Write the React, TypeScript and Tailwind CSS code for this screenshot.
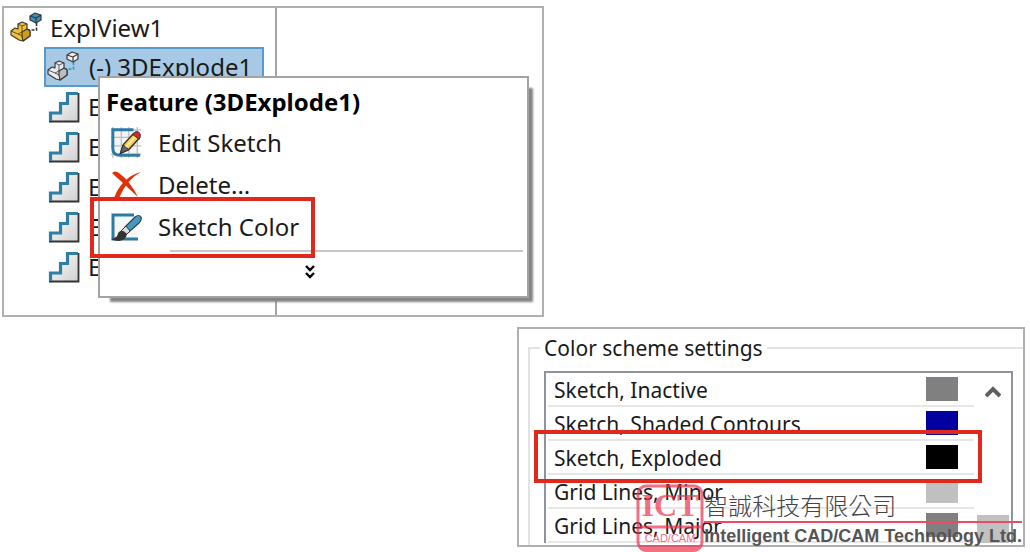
import type { ReactNode } from 'react'

const steps = [1, 2, 3, 4, 5]

const swatches = [
  { label: 'Sketch, Inactive', color: 'bg-[#808080]' },
  { label: 'Sketch, Shaded Contours', color: 'bg-[#00009f]' },
  { label: 'Sketch, Exploded', color: 'bg-black', marked: true },
  { label: 'Grid Lines, Minor', color: 'bg-[#c0c0c0]' },
  { label: 'Grid Lines, Major', color: 'bg-[#808080]' },
]

function ExplodeIcon({ part, side, cube, line }: { part: string; side: string; cube: string; line: string }) {
  return (
    <svg viewBox="0 0 32 32" className="size-8 shrink-0" aria-hidden="true">
      <path d="M26.500 11 V18 H17" fill="none" stroke={line} strokeWidth="1.6" strokeDasharray="3 1.5" />
      <g stroke="#3a3a3a" strokeWidth="1.2" strokeLinejoin="round">
        <path d="M1 19 L5 16 L8 17 L8 12 L12 10 L17 12 L17 17 L20 19 L20 24 L13 29 L9 28 L1 23 Z" fill={part} />
        <path d="M12 20 L17 17 L20 19 L20 24 L13 29 L12 24 Z" fill={side} />
        <path d="M1 19 L8 22 L12 20 L12 14 L8 12 M12 14 L17 12 M8 22 L12 24" fill="none" strokeWidth="0.8" />
        <path d="M20 4 L25 1 L31 3 L31 8 L26 11 L20 8 Z" fill={cube} />
        <path d="M20 4 L26 6 L31 3 M26 6 V11" fill="none" />
      </g>
    </svg>
  )
}

function StepIcon() {
  return (
    <svg viewBox="0 0 32 32" className="size-8 shrink-0" aria-hidden="true">
      <defs>
        <linearGradient id="step" x1="0" y1="0" x2="1" y2="1">
          <stop offset="0" stopColor="#fff" />
          <stop offset="1" stopColor="#cfcfcf" />
        </linearGradient>
      </defs>
      <path d="M2 30 V21 H12 V12 H19 V2 H31 V30 Z" fill="url(#step)" />
      <path d="M30.500 2 V30.500 H1" fill="none" stroke="#333" strokeWidth="1.8" />
      <path d="M2.500 30 V22 H12.500 V12.500 H19.500 V2.500 H30" fill="none" stroke="#2f7ea6" strokeWidth="3.2" />
    </svg>
  )
}

function EditSketchIcon() {
  return (
    <svg viewBox="0 0 34 34" className="size-8 shrink-0" aria-hidden="true">
      <rect x="3" y="3" width="27" height="26" fill="#f4f4f4" />
      <path d="M1 11 H33 M1 20 H33 M1 29 H33 M1 3 H33 M3 0 V33 M12 0 V33 M20 0 V33 M29 0 V33" stroke="#bdbdbd" strokeWidth="1.3" />
      <path d="M25 3 H3 V23 Q3 30 11 30 H32" fill="none" stroke="#2b7ba3" strokeWidth="3.2" />
      <path d="M11 28 L14 19 L25 7 L31 12 L20 24 Z" fill="#f5cf52" stroke="#333" strokeWidth="1.5" />
      <path d="M11 28 L14 19 L20 24 Z" fill="#666" stroke="#333" />
      <path d="M17 21 L27 10" stroke="#fbe9a4" strokeWidth="2" />
      <path d="M24 8 L27 5 Q30 4 32 7 Q33 10 31 13 Z" fill="#d32929" stroke="#333" />
    </svg>
  )
}

function DeleteIcon() {
  return (
    <svg viewBox="0 0 32 32" className="size-8 shrink-0" aria-hidden="true">
      <path d="M2 4 Q5 1 9 4 Q20 12 28 28 Q19 20 12 13 Q6 8 2 4 Z" fill="#e03208" />
      <path d="M31 3 Q17 10 9 29 L4 29 Q12 8 31 3 Z" fill="#e03208" />
    </svg>
  )
}

function SketchColorIcon() {
  return (
    <svg viewBox="0 0 32 32" className="size-8 shrink-0" aria-hidden="true">
      <path d="M24 4 H3 V28 H28" fill="#f6f6f6" stroke="#2b7ba3" strokeWidth="3" />
      <path d="M15 16 L25 6 Q29 3 31 6 Q32 9 29 12 L19 21 Z" fill="#4a97bd" stroke="#1e4a60" strokeWidth="1.2" />
      <path d="M11 20 L16 15 L20 20 L16 24 Z" fill="#ddd" stroke="#333" />
      <path d="M1 28 Q8 27 8 22 Q12 17 17 23 Q16 29 9 30 Q4 30 1 28 Z" fill="#333" />
    </svg>
  )
}

function MenuItem({ icon, children }: { icon: ReactNode; children: ReactNode }) {
  return (
    <li>
      <button role="menuitem" className="flex h-[42px] w-full items-center gap-4 text-left">
        {icon}
        {children}
      </button>
    </li>
  )
}

function ContextMenu() {
  return (
    <div
      role="menu"
      className="absolute top-[68px] left-[94px] w-[431px] border-2 border-[#a3a3a3] bg-white pt-[3px] shadow-[8px_8px_2px_-4px_#858585]"
    >
      <h2 className="flex h-[41px] items-center pl-1.5 font-bold text-black">Feature (3DExplode1)</h2>
      <ul className="pl-2.5">
        <MenuItem icon={<EditSketchIcon />}>Edit Sketch</MenuItem>
        <MenuItem icon={<DeleteIcon />}>Delete...</MenuItem>
        <MenuItem icon={<SketchColorIcon />}>Sketch Color</MenuItem>
      </ul>
      <hr className="mt-0.5 mr-1 ml-[70px] border-t-2 border-[#c8c8c8]" />
      <button aria-label="Show more" className="flex h-[44px] w-full items-center justify-center pr-2 pb-1">
        <svg viewBox="0 0 12 14" className="h-3.5 w-3" aria-hidden="true">
          <path d="M2 1 L6 5 L10 1 M2 8 L6 12 L10 8" fill="none" stroke="#000" strokeWidth="2.4" />
        </svg>
      </button>
      <div className="absolute top-[119px] -left-[10px] h-[61px] w-[225px] border-4 border-[#e1281c]" />
    </div>
  )
}

function FeatureTree() {
  return (
    <section className="relative mr-[47.2%] border-2 border-[#b0b0b0] text-[24px]">
      <div className="w-[273px] border-r-2 border-[#a3a3a3] pb-[28px]">
        <ul>
          <li className="flex h-[39px] items-center gap-2 pl-1.5">
            <ExplodeIcon part="#f3c02f" side="#d39a14" cube="#3a8fb9" line="#333" />
            ExplView1
          </li>
          <li className="ml-10 flex h-10 w-[220px] items-center gap-2.5 border-2 border-[#559cc9] bg-[#a7c9e5] pl-px">
            <ExplodeIcon part="#ececec" side="#bdbdbd" cube="#eeeeee" line="#3a8fb9" />
            (-) 3DExplode1
          </li>
          {/* the menu covers all but the first letter of these */}
          {steps.map((n) => (
            <li key={n} className="flex h-10 items-center gap-2 pl-11">
              <StepIcon />
              E
            </li>
          ))}
        </ul>
      </div>
      <ContextMenu />
    </section>
  )
}

function ColorScheme() {
  return (
    <section className="relative mt-2.5 mr-[3px] ml-[50.2%] h-[220px] overflow-hidden border-2 border-[#b0b0b0] pt-[7px] pl-[9px] text-[21px]">
      <fieldset className="border-t-2 border-l-2 border-[#e2e2e2] pr-2.5 pb-2 pl-2.5">
        <legend className="px-1 leading-6">Color scheme settings</legend>
        <div className="mt-[11px] ml-1 flex border-2 border-b-0 border-[#8e939c]">
          <ul className="flex-1 pl-0.5">
            {swatches.map((s) => (
              <li
                key={s.label}
                className={`${s.marked ? 'z-10' : ''} relative flex h-[34px] items-center justify-between border-b-2 border-[#e6e6e6] pr-4 pl-1.5`}
              >
                <span className="pt-1">{s.label}</span>
                <span className={`h-6 w-8 ${s.color}`} />
                {s.marked && <span className="absolute -top-[11px] -right-2 -left-3.5 h-[53px] border-4 border-[#e1281c]" />}
              </li>
            ))}
          </ul>
          <div className="flex w-[37px] flex-col items-center justify-between pt-3">
            <svg viewBox="0 0 16 14" className="h-3.5 w-4" aria-hidden="true">
              <path d="M1 11 L8 4 L15 11" fill="none" stroke="#606060" strokeWidth="4" />
            </svg>
            <div className="h-7 w-8 bg-[#c1c1c1]" />
          </div>
        </div>
      </fieldset>
    </section>
  )
}

function Watermark() {
  return (
    <div className="absolute right-2 bottom-0 flex items-end">
      <svg viewBox="0 0 68 69" className="h-[69px] w-[68px] opacity-70" role="img" aria-label="ICT CAD/CAM">
        <rect x="2" y="2" width="64" height="64" rx="8" fill="none" stroke="#ee3350" strokeWidth="3" />
        <path d="M2 43 H66" stroke="#ee3350" strokeWidth="3" />
        <path d="M2 61 H66 Q65 68 57 68 H11 Q3 68 2 61 Z" fill="#ee3350" />
        <text x="34" y="32" textAnchor="middle" className="fill-[#ee3350] font-['Liberation_Serif',serif] text-[32px] font-bold">ICT</text>
        <text x="34" y="58" textAnchor="middle" className="fill-[#ee3350] font-['Liberation_Sans',sans-serif] text-[11px]">CAD/CAM</text>
      </svg>
      <div className="flex flex-col pb-1">
        <p className="font-['Noto_Sans_CJK_TC',sans-serif] text-[24px] leading-[32px] font-light text-[#444]" lang="zh-Hant">智誠科技有限公司</p>
        <div className="h-0.5 bg-[#ee4a63]" />
        <p className="font-['Liberation_Sans',sans-serif] text-[18px] leading-[26px] font-bold whitespace-nowrap text-[#555]">
          Intelligent CAD/CAM Technology Ltd.
        </p>
      </div>
    </div>
  )
}

export default function App() {
  return (
    <main className="relative bg-white px-0.5 py-1.5 font-['Noto_Sans',sans-serif] text-[#1a1a1a]">
      <FeatureTree />
      <ColorScheme />
      <Watermark />
    </main>
  )
}
